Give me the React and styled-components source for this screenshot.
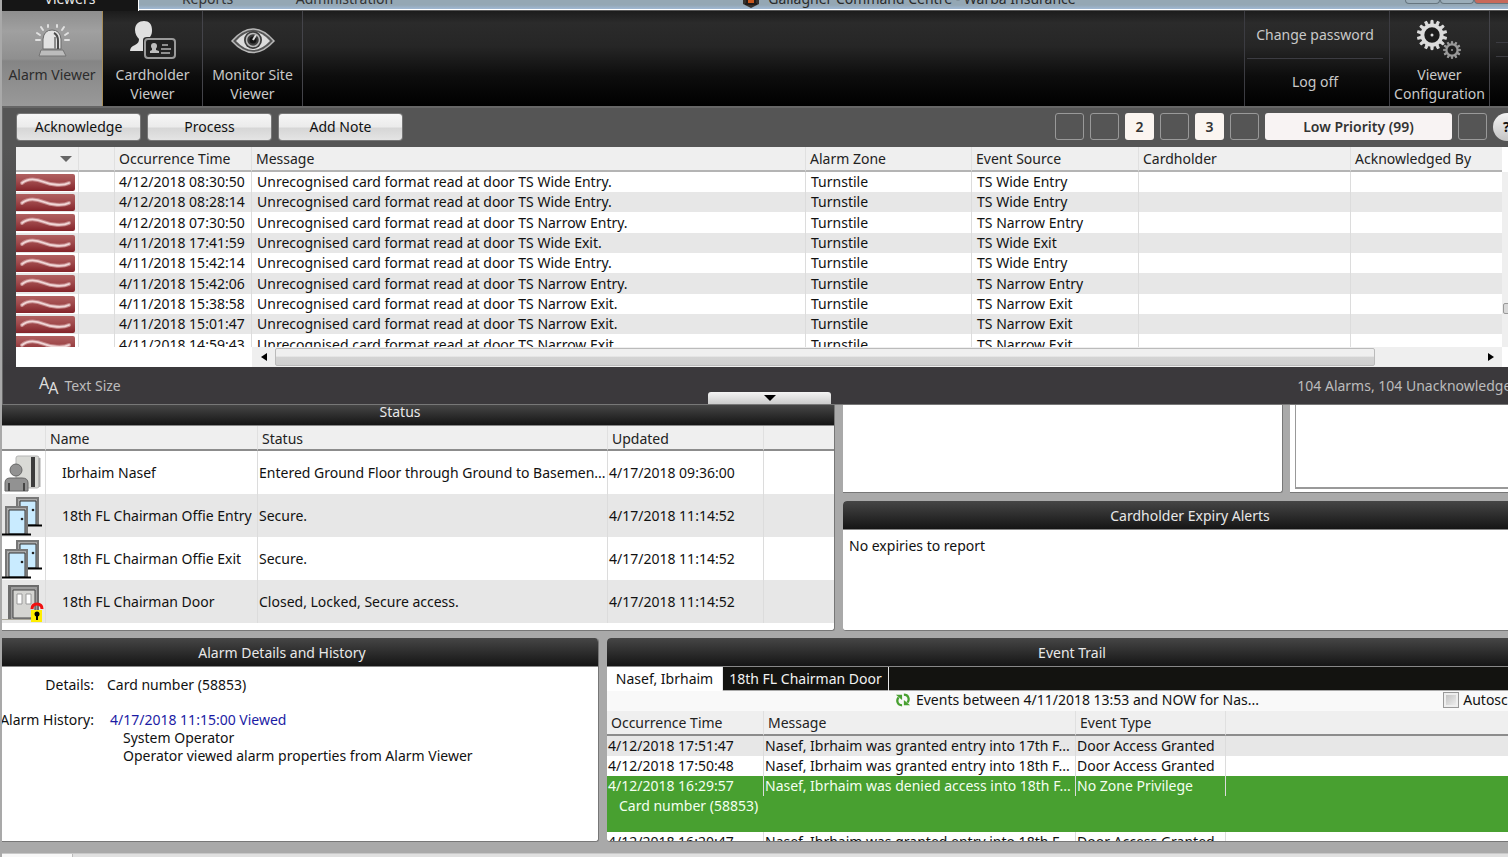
import React from "react";
import styled, { createGlobalStyle, css } from "styled-components";

const Global = createGlobalStyle`
  *, *::before, *::after { box-sizing: border-box; }
  body { margin: 0; overflow: hidden; background: #a9a9a9; }
  body, button, input, table {
    font-family: "Noto Sans", "Open Sans", "Liberation Sans", sans-serif;
    font-size: 14px;
    line-height: 18px;
    color: #111;
  }
  button { padding: 0; border: 0; background: none; cursor: pointer; }
`;

/* The client window is wider than the screen and runs off its right edge. */
const Window = styled.div`
  width: calc(100% + 30px);
  height: 100vh;
  padding-left: 2px;
  background: #a9a9a9;
  display: flex;
  flex-direction: column;
  overflow: hidden;
  white-space: nowrap;
`;

/* ---------- title bar ---------- */
const TitleBar = styled.header`
  height: 11px;
  flex: none;
  display: flex;
  align-items: flex-end;
  overflow: hidden;
  background: linear-gradient(#94a7b4 0 5px, #9fb8d4 9px, #fff 9px 10px, #555 10px);
`;
const TopTab = styled.button`
  width: 137px;
  height: 18px;
  flex: none;
  padding-bottom: 10px;
  line-height: 8px;
  display: flex;
  align-items: flex-end;
  justify-content: center;
  color: ${(p) => (p.$active ? "#e8e8e8" : "#333")};
  background: ${(p) => (p.$active ? "#161616" : "transparent")};
  border-right: ${(p) => (p.$active ? "1px solid #fff" : "0")};
`;
const TabText = styled.span`
  line-height: 18px;
  margin-bottom: -7px;
`;
const AppTitle = styled.div`
  flex: 1;
  display: flex;
  align-items: center;
  justify-content: center;
  gap: 8px;
  padding-bottom: 3px;
  color: #2a2a2a;
`;
const WindowButtons = styled.div`
  width: 133px;
  height: 11px;
  display: flex;
  padding-bottom: 7px;
`;
const WindowButton = styled.button`
  width: ${(p) => p.$w}px;
  height: 4px;
  background: ${(p) => (p.$close ? "#c8695a" : "#9badb9")};
  border: 1px solid #66757f;
  border-top: 0;
  border-radius: 0 0 4px 4px;
`;

/* ---------- ribbon ---------- */
const Ribbon = styled.nav`
  height: 95px;
  flex: none;
  display: flex;
  background: linear-gradient(#1c1c1c, #2b2b2b 12px, #262626 35px, #0d0d0d 65px, #000 95px);
`;
const RibbonButton = styled.button`
  width: 100px;
  display: flex;
  flex-direction: column;
  align-items: center;
  padding-top: 5px;
  line-height: 19px;
  color: #c9c9c9;
  border-right: 1px solid #44444a;
  ${(p) =>
    p.$active &&
    css`
      width: 101px;
      color: #2c2c2c;
      background: linear-gradient(#8e8e8e, #a0a0a0 20px, #8f8f8f 48px, #858585 50px, #999 95px);
      border-right-color: #a58a55;
    `}
`;
const RibbonIcon = styled.svg`
  width: 50px;
  height: 49px;
  flex: none;
`;
const RibbonSpace = styled.div`
  flex: 1;
`;
const Account = styled.div`
  width: 146px;
  padding: 0 6px 0 2px;
  border-left: 1px solid #3c3c42;
  border-right: 1px solid #3c3c42;
  display: flex;
  flex-direction: column;
`;
const AccountButton = styled.button`
  height: 47px;
  color: #c9c9c9;
  & + & { border-top: 1px solid #3c3c42; }
`;
const Stub = styled.div`
  width: 48px;
  padding: 31px 0 38px 6px;
  &::before {
    content: "";
    display: block;
    height: 15px;
    border: 1px solid #3c3c42;
    border-width: 1px 0;
  }
`;

/* ---------- alarm list ---------- */
const AlarmPanel = styled.section`
  flex: none;
  border-left: 1px solid #666;
  border-top: 2px solid #666;
  border-bottom: 1px solid #777;
  background: linear-gradient(#555 0 40px, #3b393c 260px);
`;
const Toolbar = styled.div`
  height: 39px;
  padding: 0 0 2px 14px;
  display: flex;
  align-items: center;
  gap: 8px;
`;
const ActionButton = styled.button`
  width: 123px;
  height: 26px;
  border-radius: 3px;
  background: linear-gradient(#f6f6f6, #ebebeb 50%, #d6d6d6 54%, #e4e4e4);
  box-shadow: 0 0 0 1px #777;
`;
const Priorities = styled.div`
  margin-left: auto;
  display: flex;
  align-items: center;
  gap: 6px;
`;
const Priority = styled.button`
  width: ${(p) => (p.$wide ? 187 : 29)}px;
  height: 27px;
  border-radius: 3px;
  font-weight: 600;
  color: #333;
  ${(p) =>
    p.children
      ? css`background: ${p.$wide ? "#f8f3f3" : "#fbf5f0"};`
      : css`border: 1px solid #999;`}
`;
const Help = styled.button`
  width: 45px;
  height: 28px;
  border-radius: 14px;
  padding-left: 10px;
  text-align: left;
  font-weight: 700;
  background: linear-gradient(#f4f4f4, #c4c4c4);
`;
const ListFrame = styled.div`
  margin-left: 13px;
  background: #fff;
  display: flex;
`;
const ListMain = styled.div`
  flex: 1;
  min-width: 0;
`;
const Clip = styled.div`
  height: ${(p) => p.$h}px;
  overflow: hidden;
`;
const Table = styled.table`
  width: 100%;
  table-layout: fixed;
  border-collapse: separate;
  border-spacing: 0;
  th, td {
    padding: 0 0 0 5px;
    font-weight: 400;
    text-align: left;
    overflow: hidden;
    text-overflow: ellipsis;
    border-right: 1px solid #dcdcdc;
  }
  th:last-child, td:last-child { border-right: 0; }
  th {
    height: 25px;
    padding-left: 4px;
    background: #efefef;
    border-bottom: 2px solid #b4b4b4;
    border-right-color: #e0e0e0;
    color: #222;
  }
`;
const AlarmRow = styled.tr`
  height: 20px;
  &:nth-child(3n) { height: 21px; }
  &:nth-child(even) { background: #e7e7e7; }
  && td:first-child { padding: 0; }
  td:nth-child(3) { padding-left: 4px; }
`;
const Swatch = styled.svg`
  display: block;
  width: 59px;
  height: 17px;
`;
const SortMark = styled.svg`
  display: block;
  width: 12px;
  height: 6px;
  margin-left: 40px;
`;
const HScroll = styled.div`
  height: 20px;
  margin-left: 236px;
  padding: 1px 0 1px;
  display: flex;
  align-items: center;
  background: #efefef;
`;
const ScrollArrow = styled.button`
  width: 23px;
  height: 18px;
  display: grid;
  place-items: center;
`;
const ScrollThumb = styled.div`
  flex: 1;
  height: 18px;
  margin-right: 104px;
  border: 1px solid #bbb;
  border-radius: 2px;
  background: linear-gradient(#efefef 45%, #d3d3d3 50%, #cfcfcf);
`;
const VScroll = styled.div`
  width: 36px;
  margin-top: 25px;
  margin-bottom: 20px;
  padding: 131px 0 0 1px;
  background: #efefef;
`;
const VThumb = styled.div`
  height: 11px;
  border: 1px solid #999;
  border-radius: 2px;
  background: #d8d8d8;
`;
const AlarmFooter = styled.footer`
  height: 37px;
  padding: 0 18px 0 16px;
  display: grid;
  grid-template-columns: 1fr 123px 1fr;
  align-items: center;
  color: #bcbcbc;
`;
const TextSize = styled.button`
  justify-self: start;
  margin-left: 20px;
  display: flex;
  align-items: center;
  gap: 6px;
  color: #bcbcbc;
`;
const Letters = styled.span`
  display: flex;
  color: #ddd;
  font-size: 16px;
  line-height: 18px;
  span:first-child { padding-bottom: 5px; }
  span:last-child { padding-top: 5px; margin-left: -1px; }
`;
const Handle = styled.button`
  height: 12px;
  align-self: end;
  display: grid;
  place-items: center;
  border-radius: 3px 3px 0 0;
  background: linear-gradient(#f4f4f4, #ccc);
`;
const Summary = styled.span`
  justify-self: end;
`;

/* ---------- lower panels ---------- */
const UpperRow = styled.div`
  height: 226px;
  flex: none;
  display: flex;
  gap: 8px;
`;
const LowerRow = styled.div`
  flex: 1;
  min-height: 0;
  margin-top: 7px;
  display: flex;
  gap: 8px;
`;
const Panel = styled.section`
  ${(p) => (p.$w ? `width: ${p.$w}; flex: none;` : "flex: 1; min-width: 0;")}
  min-height: 0;
  display: flex;
  flex-direction: column;
  overflow: hidden;
  background: #fff;
  border-radius: ${(p) => (p.$flush ? "0 0 3px 0" : p.$edge ? "0 4px 3px 0" : "4px 4px 3px 3px")};
  border-right: 1px solid #777;
  border-bottom: 1px solid #777;
`;
const PanelTitle = styled.h2`
  margin: 0;
  height: ${(p) => (p.$short ? 21 : 29)}px;
  flex: none;
  display: flex;
  align-items: center;
  justify-content: center;
  font-size: 14px;
  font-weight: 400;
  line-height: 14px;
  padding-top: ${(p) => (p.$short ? 0 : 2)}px;
  padding-right: ${(p) => (p.$shift ? 36 : 0)}px;
  padding-bottom: ${(p) => (p.$short ? 6 : 0)}px;
  color: #e8e8e8;
  background: linear-gradient(#464646, #151515);
  border-bottom: 1px solid #888;
`;
const RightColumn = styled.div`
  flex: 1;
  min-width: 0;
  display: flex;
  flex-direction: column;
  gap: 8px;
`;
const BlankRow = styled.div`
  height: 88px;
  display: flex;
  gap: 7px;
`;
const InnerFrame = styled.div`
  flex: 1;
  margin: 0 0 3px 5px;
  border-left: 1px solid #999;
  border-bottom: 2px solid #999;
`;
const Note = styled.p`
  margin: 7px 6px;
`;
const StatusTable = styled(Table)`
  th { height: 25px; padding-top: 2px; border-bottom-color: #8c8c8c; }
  td { height: 43px; padding-left: 1px; }
  td:first-child { padding: 0; }
  td:nth-child(2) { padding-left: 16px; }
  tr:nth-child(even) td { background: #e7e7e7; }
`;
const RowIcon = styled.svg`
  display: block;
  width: 42px;
  height: 40px;
`;
const DetailList = styled.dl`
  margin: 0;
  padding-top: 9px;
  display: grid;
  grid-template-columns: 92px 1fr;
  column-gap: 13px;
  row-gap: 17px;
  dt { display: flex; justify-content: flex-end; }
  dd { margin: 0; }
`;
const HistoryEntry = styled.div`
  padding-left: ${(p) => (p.$sub ? 16 : 3)}px;
  color: ${(p) => (p.$sub ? "#111" : "#1c1ca4")};
`;
const TrailTabs = styled.div`
  height: 24px;
  flex: none;
  display: flex;
  background: #131310;
  border-bottom: 1px solid #aaa;
`;
const TrailTab = styled.button`
  height: 24px;
  color: ${(p) => (p.$active ? "#111" : "#f2f2f2")};
  background: ${(p) => (p.$active ? "#fff" : "transparent")};
  width: ${(p) => (p.$active ? 116 : 166)}px;
  border-right: 1px solid #e8e8e8;
`;
const TrailInfo = styled.div`
  height: 20px;
  flex: none;
  padding: 0 8px 2px 18px;
  display: grid;
  grid-template-columns: 1fr 364px 1fr;
  align-items: center;
  background: #f9f9f9;
`;
const Range = styled.span`
  grid-column: 2;
  display: flex;
  align-items: center;
  gap: 5px;
`;
const Auto = styled.label`
  justify-self: end;
  display: flex;
  align-items: center;
  gap: 4px;
`;
const Check = styled.input`
  appearance: none;
  width: 16px;
  height: 16px;
  margin: 0;
  border: 1px solid #999;
  background: linear-gradient(135deg, #bbb, #f4f4f4);
  box-shadow: inset 0 0 0 2px #eee;
`;
const TrailTable = styled(Table)`
  th { border-bottom-color: #8c8c8c; }
  td { height: 20px; padding-left: 1px; }
  tbody tr:first-child td { background: #e7e7e7; }
`;
const Selected = styled.tr`
  && td {
    background: #48a030;
    color: #f4fff0;
    height: ${(p) => (p.$detail ? 36 : 20)}px;
    ${(p) => p.$detail && "padding-left: 12px; padding-bottom: 16px;"}
  }
`;
const BottomBar = styled.footer`
  height: 4px;
  flex: none;
  margin-top: 11px;
  display: flex;
  background: #e0e0e0;
  border-top: 1px solid #c8c8c8;
  &::before {
    content: "";
    width: 71px;
    background: #f8f8f8;
    border-right: 1px solid #bbb;
  }
`;

/* ---------- drawings ---------- */
const SirenIcon = () => (
  <RibbonIcon viewBox="0 0 50 49" fill="none">
    <g stroke="#e0e0e0" strokeWidth="2" strokeLinecap="round">
      <path d="M21 9v2M30 9v2M14 11l2 3M37 11l-2 3M10 17l3 2M41 17l-3 2M9 24h4M38 24h4" />
    </g>
    <path d="M16 33V23q1-9 9-9t9 9v10z" fill="#e2e2e2" stroke="#6c6c6c" />
    <path d="M27 17q4 2 4 8v8" stroke="#4a4a4a" strokeWidth="2" />
    <path d="M28 21v12" stroke="#8c8c8c" strokeWidth="2" />
    <path d="M14 34h22l3 6H12z" fill="#bcbcbc" stroke="#747474" />
  </RibbonIcon>
);
const CardholderIcon = () => (
  <RibbonIcon viewBox="0 0 50 49" fill="none">
    <path
      d="M16 5c-5 0-9 3-9 9 0 4 2 7 4 9 0 3-1 4-4 6-3 1-5 3-5 6h13V24q0-3 4-3h3c2-3 2-5 2-7 0-6-3-9-8-9z"
      fill="#e0e0e0"
    />
    <rect x="17" y="23" width="30" height="19" rx="3" fill="#222" stroke="#9a9a9a" strokeWidth="2" />
    <circle cx="26" cy="30" r="3" fill="#bdbdbd" />
    <path d="M24 31h4v3l3 1v2h-9v-2l2-1z" fill="#bdbdbd" />
    <path d="M34 29h6M33 33h10M33 37h9" stroke="#8f8f8f" strokeWidth="2" />
  </RibbonIcon>
);
const EyeIcon = () => (
  <RibbonIcon viewBox="0 0 50 49" fill="none">
    <path d="M4 25Q25 1 46 25Q25 48 4 25z" fill="#555" stroke="#b8b8b8" strokeWidth="1.5" />
    <path d="M8 25Q25 6 42 25Q25 43 8 25z" fill="#dcdcdc" />
    <circle cx="25" cy="24" r="9" fill="#3c3c3c" />
    <circle cx="25" cy="24" r="6.5" stroke="#bbb" strokeWidth="1.5" />
    <circle cx="25" cy="24" r="3.5" fill="#151515" />
    <path d="M25 24l3-5" stroke="#ddd" strokeWidth="2" />
  </RibbonIcon>
);
const Gear = ({ cx, cy, r, teeth, color, hole }) => (
  <g transform={`translate(${cx} ${cy})`}>
    {Array.from({ length: teeth }, (_, i) => (
      <path
        key={i}
        d={`M${-r / 9} ${-r * 0.7}L${-r / 12} ${-r * 1.22}H${r / 12}L${r / 9} ${-r * 0.7}z`}
        fill={color}
        stroke={color}
        strokeWidth="1"
        transform={`rotate(${(360 / teeth) * i})`}
      />
    ))}
    <circle r={r * 0.8} stroke={color} strokeWidth={r * 0.32} fill="#1c1c1c" />
    <circle r={hole} fill={color} />
  </g>
);
const GearsIcon = () => (
  <RibbonIcon viewBox="0 0 50 49" fill="none">
    <Gear cx={17} cy={19} r={12} teeth={14} color="#dcdcdc" hole={1.5} />
    <Gear cx={37} cy={34} r={7} teeth={12} color="#999" hole={1} />
  </RibbonIcon>
);
const Logo = () => (
  <svg width="18" height="18" viewBox="0 0 18 18">
    <path d="M9 0l8 4v10l-8 4-8-4V4z" fill="#35302c" />
    <circle cx="9" cy="10" r="4" fill="#c9571d" />
    <path d="M3 14h12M5 6v9M13 6v9" stroke="#201c1a" strokeWidth="2" />
  </svg>
);
const AlarmSwatch = () => (
  <Swatch viewBox="0 0 59 17">
    <defs>
      <linearGradient id="red" x1="0" y1="0" x2="0" y2="1">
        <stop offset="0" stopColor="#b06060" />
        <stop offset=".45" stopColor="#a04a4c" />
        <stop offset="1" stopColor="#84242a" />
      </linearGradient>
    </defs>
    <rect x="-2" width="61" height="17" rx="2" fill="url(#red)" />
    <path d="M6 9C12 4 21 5 28 8S47 12 53 9" fill="none" stroke="#c58a8c" strokeWidth="4" strokeLinecap="round" />
    <path d="M6 9C12 4 21 5 28 8S47 12 53 9" fill="none" stroke="#f0d6d6" strokeWidth="1.8" strokeLinecap="round" />
  </Swatch>
);
const PersonIcon = () => (
  <RowIcon viewBox="0 0 42 40">
    <rect x="14" y="3" width="23" height="32" rx="2" fill="#d9dad6" stroke="#b5b5b5" />
    <path d="M31 4v30" stroke="#3c3c3c" strokeWidth="4" />
    <path d="M37.500 5v29" stroke="#a9a9a9" strokeWidth="2" />
    <circle cx="14" cy="17" r="6" fill="#929292" stroke="#666" />
    <path d="M3 38V30q0-5 5-5h12q6 0 6 5v8z" fill="#929292" stroke="#666" />
    <path d="M7 30v8M22 30v8" stroke="#444" strokeWidth="2" />
  </RowIcon>
);
const Pane = ({ x, y }) => (
  <g transform={`translate(${x} ${y})`}>
    <path d="M0 0h23v28H0z" fill="#777" />
    <path d="M2 2h19v26H2z" fill="#aaa" />
    <path d="M4 4h16v24H4z" fill="#c9ebff" stroke="#333" />
    <path d="M-3 28.500h29" stroke="#000" strokeWidth="2" />
    <circle cx="17" cy="13" r="1.300" fill="#222" />
  </g>
);
const DoorsIcon = () => (
  <RowIcon viewBox="0 0 42 40">
    <Pane x={14} y={1} />
    <Pane x={3} y={10} />
  </RowIcon>
);
const LockedDoorIcon = () => (
  <RowIcon viewBox="0 0 42 40">
    <path d="M6 3h31v34H6z" fill="#6c6c6c" />
    <path d="M9 5h26v32H9z" fill="#9c9c9c" />
    <path d="M11 8h22v28H11z" fill="#d5d5d2" stroke="#444" />
    <path d="M15 12h5v10h-5zM24 12h5v10h-5z" fill="#fff" stroke="#999" />
    <path d="M0 37.500h30" stroke="#aaa79a" />
    <path d="M30 27q0-5 5-5t5 5" fill="none" stroke="#f01010" strokeWidth="3" />
    <rect x="29" y="28" width="11" height="12" fill="#ffee00" />
    <circle cx="35" cy="32" r="2.500" fill="#000" />
    <path d="M35 32v6" stroke="#000" strokeWidth="2" />
  </RowIcon>
);
const RefreshIcon = () => (
  <svg width="18" height="16" viewBox="0 0 18 16" fill="none">
    <path d="M8 14C3 14 1 9 4 5M10 2c5 0 7 5 4 9" stroke="#48a030" strokeWidth="2.500" />
    <path d="M1 2h7v6zM17 14h-7V8z" fill="#48a030" />
  </svg>
);
const Tri = ({ d, w = 6, h = 8, fill = "#000" }) => (
  <svg width={w} height={h} viewBox={`0 0 ${w} ${h}`}>
    <path d={d} fill={fill} />
  </svg>
);

/* ---------- data ---------- */
const alarms = [
  ["4/12/2018 08:30:50", "Wide Entry"],
  ["4/12/2018 08:28:14", "Wide Entry"],
  ["4/12/2018 07:30:50", "Narrow Entry"],
  ["4/11/2018 17:41:59", "Wide Exit"],
  ["4/11/2018 15:42:14", "Wide Entry"],
  ["4/11/2018 15:42:06", "Narrow Entry"],
  ["4/11/2018 15:38:58", "Narrow Exit"],
  ["4/11/2018 15:01:47", "Narrow Exit"],
  ["4/11/2018 14:59:43", "Narrow Exit"],
];
const statuses = [
  [PersonIcon, "Ibrhaim Nasef", "Entered Ground Floor through Ground to Basemen...", "4/17/2018 09:36:00"],
  [DoorsIcon, "18th FL Chairman Offie Entry", "Secure.", "4/17/2018 11:14:52"],
  [DoorsIcon, "18th FL Chairman Offie Exit", "Secure.", "4/17/2018 11:14:52"],
  [LockedDoorIcon, "18th FL Chairman Door", "Closed, Locked, Secure access.", "4/17/2018 11:14:52"],
];
const priorities = ["", "", "2", "", "3", "", "Low Priority (99)", ""];

const Cols = ({ widths }) => (
  <colgroup>
    {widths.map((w, i) => (
      <col key={i} width={w || undefined} />
    ))}
  </colgroup>
);
const Head = ({ labels }) => (
  <thead>
    <tr>
      {labels.map((l, i) => (
        <th key={i}>{l}</th>
      ))}
    </tr>
  </thead>
);

export default function App() {
  return (
    <>
      <Global />
      <Window>
        <TitleBar>
          <TopTab $active><TabText>Viewers</TabText></TopTab>
          <TopTab><TabText>Reports</TabText></TopTab>
          <TopTab><TabText>Administration</TabText></TopTab>
          <AppTitle>
            <Logo />
            Gallagher Command Centre - Warba Insurance
          </AppTitle>
          <WindowButtons>
            <WindowButton $w={35} aria-label="Minimise" />
            <WindowButton $w={34} aria-label="Restore" />
            <WindowButton $w={60} $close aria-label="Close" />
          </WindowButtons>
        </TitleBar>

        <Ribbon>
          <RibbonButton $active><SirenIcon />Alarm Viewer</RibbonButton>
          <RibbonButton><CardholderIcon />Cardholder<br />Viewer</RibbonButton>
          <RibbonButton><EyeIcon />Monitor Site<br />Viewer</RibbonButton>
          <RibbonSpace />
          <Account>
            <AccountButton>Change password</AccountButton>
            <AccountButton>Log off</AccountButton>
          </Account>
          <RibbonButton><GearsIcon />Viewer<br />Configuration</RibbonButton>
          <Stub />
        </Ribbon>

        <AlarmPanel>
          <Toolbar>
            <ActionButton>Acknowledge</ActionButton>
            <ActionButton>Process</ActionButton>
            <ActionButton>Add Note</ActionButton>
            <Priorities>
              {priorities.map((p, i) => (
                <Priority key={i} $wide={p.length > 1}>{p}</Priority>
              ))}
              <Help>?</Help>
            </Priorities>
          </Toolbar>
          <ListFrame>
            <ListMain>
              <Clip $h={200}>
                <Table>
                  <Cols widths={[63, 36, 137, 0, 166, 167, 212, 151]} />
                  <Head
                    labels={[
                      <SortMark viewBox="0 0 12 6"><path d="M0 0h12L6 6z" fill="#666" /></SortMark>,
                      "", "Occurrence Time", "Message", "Alarm Zone", "Event Source", "Cardholder", "Acknowledged By",
                    ]}
                  />
                  <tbody>
                    {alarms.map(([time, door]) => (
                      <AlarmRow key={time}>
                        <td><AlarmSwatch /></td>
                        <td />
                        <td>{time}</td>
                        <td>Unrecognised card format read at door TS {door}.</td>
                        <td>Turnstile</td>
                        <td>TS {door}</td>
                        <td />
                        <td />
                      </AlarmRow>
                    ))}
                  </tbody>
                </Table>
              </Clip>
              <HScroll>
                <ScrollArrow aria-label="Scroll left"><Tri d="M6 0v8L0 4z" /></ScrollArrow>
                <ScrollThumb />
                <ScrollArrow aria-label="Scroll right"><Tri d="M0 0v8l6-4z" /></ScrollArrow>
              </HScroll>
            </ListMain>
            <VScroll><VThumb /></VScroll>
          </ListFrame>
          <AlarmFooter>
            <TextSize>
              <Letters><span>A</span><span>A</span></Letters>
              Text Size
            </TextSize>
            <Handle aria-label="Collapse"><Tri d="M0 0h12L6 6z" w={12} h={6} /></Handle>
            <Summary>104 Alarms, 104 Unacknowledged</Summary>
          </AlarmFooter>
        </AlarmPanel>

        <UpperRow>
          <Panel $w="833px" $flush>
            <PanelTitle $short $shift>Status</PanelTitle>
            <StatusTable>
              <Cols widths={[44, 212, 350, 156, 0]} />
              <Head labels={["", "Name", "Status", "Updated", ""]} />
              <tbody>
                {statuses.map(([Icon, name, status, updated]) => (
                  <tr key={name}>
                    <td><Icon /></td>
                    <td>{name}</td>
                    <td>{status}</td>
                    <td>{updated}</td>
                    <td />
                  </tr>
                ))}
              </tbody>
            </StatusTable>
          </Panel>
          <RightColumn>
            <BlankRow>
              <Panel $w="440px" $flush />
              <Panel $flush><InnerFrame /></Panel>
            </BlankRow>
            <Panel>
              <PanelTitle>Cardholder Expiry Alerts</PanelTitle>
              <Note>No expiries to report</Note>
            </Panel>
          </RightColumn>
        </UpperRow>

        <LowerRow>
          <Panel $w="597px" $edge>
            <PanelTitle $shift>Alarm Details and History</PanelTitle>
            <DetailList>
              <dt>Details:</dt>
              <dd>Card number (58853)</dd>
              <dt>Alarm History:</dt>
              <dd>
                <HistoryEntry>4/17/2018 11:15:00 Viewed</HistoryEntry>
                <HistoryEntry $sub>System Operator</HistoryEntry>
                <HistoryEntry $sub>Operator viewed alarm properties from Alarm Viewer</HistoryEntry>
              </dd>
            </DetailList>
          </Panel>
          <Panel>
            <PanelTitle>Event Trail</PanelTitle>
            <TrailTabs>
              <TrailTab $active>Nasef, Ibrhaim</TrailTab>
              <TrailTab>18th FL Chairman Door</TrailTab>
            </TrailTabs>
            <TrailInfo>
              <Range><RefreshIcon />Events between 4/11/2018 13:53 and NOW for Nas...</Range>
              <Auto><Check type="checkbox" />Autoscroll</Auto>
            </TrailInfo>
            <TrailTable>
              <Cols widths={[157, 312, 150, 0]} />
              <Head labels={["Occurrence Time", "Message", "Event Type", ""]} />
              <tbody>
                <tr>
                  <td>4/12/2018 17:51:47</td>
                  <td>Nasef, Ibrhaim was granted entry into 17th F...</td>
                  <td>Door Access Granted</td>
                  <td />
                </tr>
                <tr>
                  <td>4/12/2018 17:50:48</td>
                  <td>Nasef, Ibrhaim was granted entry into 18th F...</td>
                  <td>Door Access Granted</td>
                  <td />
                </tr>
                <Selected>
                  <td>4/12/2018 16:29:57</td>
                  <td>Nasef, Ibrhaim was denied access into 18th F...</td>
                  <td>No Zone Privilege</td>
                  <td />
                </Selected>
                <Selected $detail>
                  <td colSpan={4}>Card number (58853)</td>
                </Selected>
                <tr>
                  <td>4/12/2018 16:20:47</td>
                  <td>Nasef, Ibrhaim was granted entry into 18th F...</td>
                  <td>Door Access Granted</td>
                  <td />
                </tr>
              </tbody>
            </TrailTable>
          </Panel>
        </LowerRow>
        <BottomBar />
      </Window>
    </>
  );
}
